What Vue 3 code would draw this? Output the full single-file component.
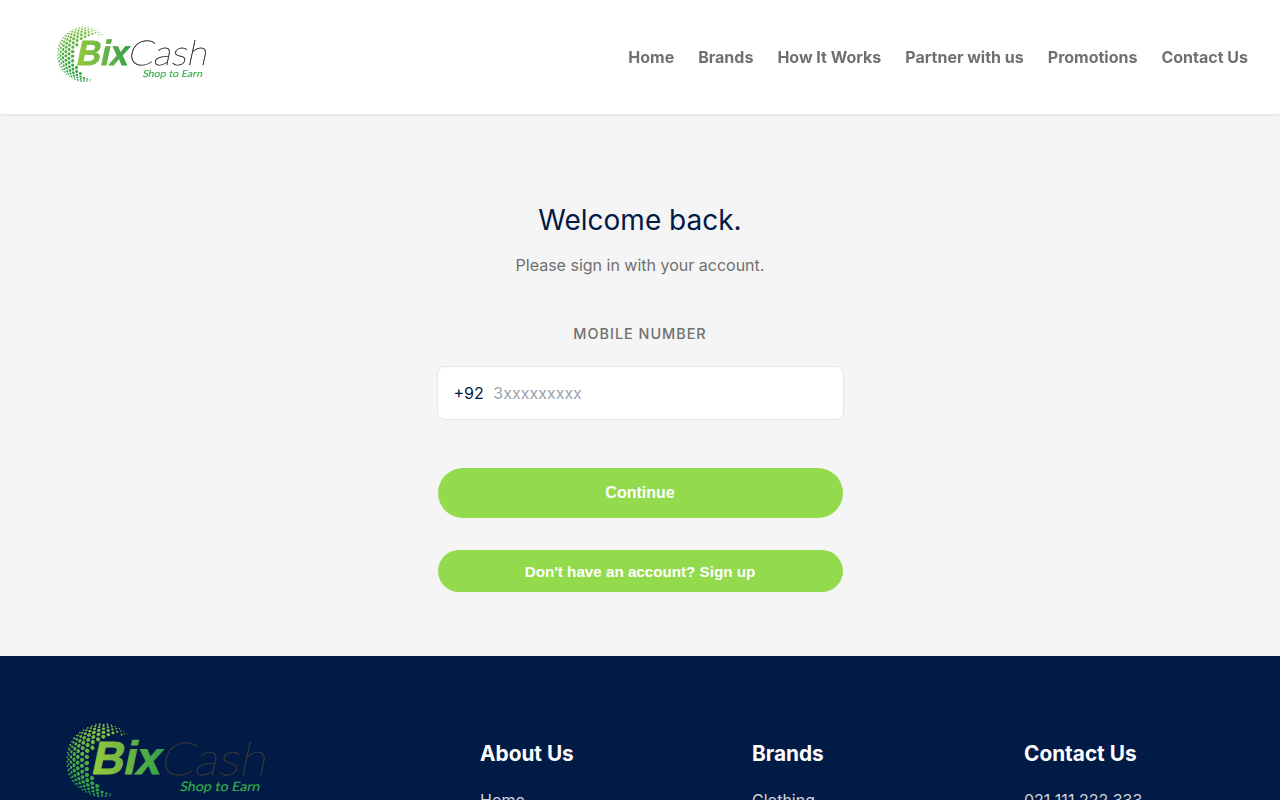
<script setup>
import { ref } from 'vue'

const mobile = ref('')
const navLinks = ['Home', 'Brands', 'How It Works', 'Partner with us', 'Promotions', 'Contact Us']
const footerColumns = [
  { title: 'About Us', first: 'Home' },
  { title: 'Brands', first: 'Clothing' },
  { title: 'Contact Us', first: '021 111 222 333' },
]

// Halftone globe: a hexagonal grid projected on a sphere, cut to a crescent.
const R = 36.5
const dots = []
const step = 0.175
for (let row = -14; row <= 14; row++) {
  for (let col = -14; col <= 14; col++) {
    const gx = (col + (row % 2 ? 0.5 : 0)) * step
    const gy = row * step * 0.866
    const theta = Math.hypot(gx, gy)
    if (theta > 1.5) continue
    const k = theta ? Math.sin(theta) / theta : 1
    const a = -0.5
    const px = 36.8 + R * k * (gx * Math.cos(a) - gy * Math.sin(a))
    const py = 36.3 + R * k * (gx * Math.sin(a) + gy * Math.cos(a))
    if (Math.hypot(px - 53, py - 40.5) < 30) continue
    if (px > 64 || (py > 60 && px > 46)) continue
    // Dots shrink towards the limb and towards both tips of the crescent.
    const taper = px > 36 ? Math.max(0.55, 1 - (px - 36) / 55) : 1
    const rx = 2.6 * Math.max(0.28, Math.cos(theta)) * taper
    dots.push({
      x: px.toFixed(2),
      y: py.toFixed(2),
      rx: rx.toFixed(2),
      ry: Math.min(2.1 * taper, rx * 1.35).toFixed(2),
      rot: ((Math.atan2(py - 36.3, px - 36.8) * 180) / Math.PI).toFixed(1),
    })
  }
}
const logos = { header: 'logo-header', footer: 'logo-footer' }
</script>

<template>
  <div class="page">
    <svg class="defs" width="0" height="0" aria-hidden="true">
      <defs>
        <linearGradient id="globe-fill" gradientUnits="userSpaceOnUse" x1="40" y1="0" x2="20" y2="74">
          <stop offset="0" stop-color="#8cc63f" />
          <stop offset="0.5" stop-color="#55ad42" />
          <stop offset="1" stop-color="#22a04a" />
        </linearGradient>
        <linearGradient id="bix-fill" gradientUnits="userSpaceOnUse" x1="2" y1="0" x2="70" y2="-18">
          <stop offset="0" stop-color="#96cb3c" />
          <stop offset="0.5" stop-color="#6cb544" />
          <stop offset="1" stop-color="#2fa04b" />
        </linearGradient>
        <symbol id="bix-logo" viewBox="0 0 200 76" overflow="visible">
          <g fill="url(#globe-fill)">
            <ellipse
              v-for="(d, i) in dots" :key="i"
              :cx="d.x" :cy="d.y" :rx="d.rx" :ry="d.ry"
              :transform="`rotate(${d.rot} ${d.x} ${d.y})`"
            />
          </g>
          <text transform="translate(24.2 50.3) skewX(-12)" font-family="Liberation Sans, sans-serif" font-weight="700" font-size="46.5" textLength="69" lengthAdjust="spacingAndGlyphs" fill="url(#bix-fill)" stroke="url(#bix-fill)" stroke-width="1">Bix</text>
          <text transform="translate(93 50.5) skewX(-12)" font-family="Lato, sans-serif" font-weight="100" font-size="46" textLength="106.5" lengthAdjust="spacingAndGlyphs" fill="#35363a" stroke="#35363a" stroke-width="0.6">Cash</text>
          <text transform="translate(113.5 67) skewX(-12)" font-family="Lato, sans-serif" font-weight="400" font-size="13" textLength="80" lengthAdjust="spacingAndGlyphs" fill="#35ae4a" stroke="#35ae4a" stroke-width="0.15">Shop to Earn</text>
        </symbol>
      </defs>
    </svg>

    <header class="header">
      <svg :class="logos.header" viewBox="0 0 200 76" role="img" aria-label="BixCash"><use href="#bix-logo" width="200" height="76" /></svg>
      <nav class="nav">
        <a v-for="l in navLinks" :key="l">{{ l }}</a>
      </nav>
    </header>

    <main class="main">
      <form class="form" @submit.prevent>
        <h1>Welcome back.</h1>
        <p class="lead">Please sign in with your account.</p>
        <label for="mobile">Mobile Number</label>
        <div class="field">
          <span>+92</span>
          <input id="mobile" v-model="mobile" type="tel" placeholder="3xxxxxxxxx" />
        </div>
        <button class="continue" type="submit">Continue</button>
        <button class="signup" type="button">Don't have an account? Sign up</button>
      </form>
    </main>

    <footer class="footer">
      <svg :class="logos.footer" viewBox="0 0 200 76" role="img" aria-label="BixCash"><use href="#bix-logo" width="200" height="76" /></svg>
      <section v-for="c in footerColumns" :key="c.title">
        <h3>{{ c.title }}</h3>
        <a>{{ c.first }}</a>
      </section>
    </footer>
  </div>
</template>

<style>
body { background: #f5f5f5; }
html, body { overflow: hidden; }
</style>

<style scoped>
.page {
  height: 800px;
  overflow: hidden;
  display: flex;
  flex-direction: column;
  background: #f5f5f5;
  font-family: Inter, sans-serif;
  font-size: 16px;
  line-height: 24px;
}
.defs { position: absolute; }
.header {
  height: 114px;
  flex: none;
  box-sizing: border-box;
  padding: 0 32px 0 57px;
  display: flex;
  align-items: center;
  justify-content: space-between;
  background: #fff;
  box-shadow: 0 1px 4px rgba(0, 0, 0, 0.09);
  will-change: transform;
}
.logo-header { width: 150px; height: 57px; margin-bottom: 4px; overflow: visible; }
.nav { display: flex; gap: 24px; font-weight: 700; color: #707070; }
.main { height: 542px; flex: none; display: flex; justify-content: center; }
.form {
  width: 405px;
  padding-top: 84px;
  display: flex;
  flex-direction: column;
  text-align: center;
}
h1 { margin: 0; font-size: 28px; line-height: 44px; font-weight: 400; color: #021a46; }
.lead { margin: 11px 0 0; color: #707070; }
label {
  margin-top: 47px;
  font-size: 14.4px;
  line-height: 20px;
  font-weight: 500;
  letter-spacing: 1px;
  text-transform: uppercase;
  color: #707070;
}
.field {
  height: 54px;
  box-sizing: border-box;
  margin: 22px -1px 0;
  padding: 0 16px;
  display: flex;
  align-items: center;
  gap: 9.6px;
  background: #fff;
  border: 1px solid #e5e7eb;
  border-radius: 8px;
  color: #021a46;
}
input {
  flex: 1;
  min-width: 0;
  padding: 0;
  border: 0;
  outline: 0;
  background: none;
  font: inherit;
  color: inherit;
}
input::placeholder { color: #9ca3af; opacity: 1; }
button {
  border: 0;
  padding: 0;
  border-radius: 25px;
  background: #93db4d;
  color: #fff;
  font-family: "Liberation Sans", Arial, sans-serif;
  font-weight: 700;
}
.continue { height: 50px; margin-top: 48px; font-size: 16px; }
.signup { height: 42px; margin-top: 32px; font-size: 15.2px; }
.footer {
  height: 144px;
  flex: none;
  box-sizing: border-box;
  padding: 68px 32px 0 66px;
  display: grid;
  grid-template-columns: 414px 272px 272px 1fr;
  overflow: hidden;
  background: #021a46;
}
.logo-footer { width: 200px; height: 76px; overflow: visible; }
section { padding-top: 16px; }
h3 { margin: 0 0 20px; font-size: 20.8px; line-height: 28px; font-weight: 700; color: #fff; }
section a { color: #d1d5db; }
</style>
